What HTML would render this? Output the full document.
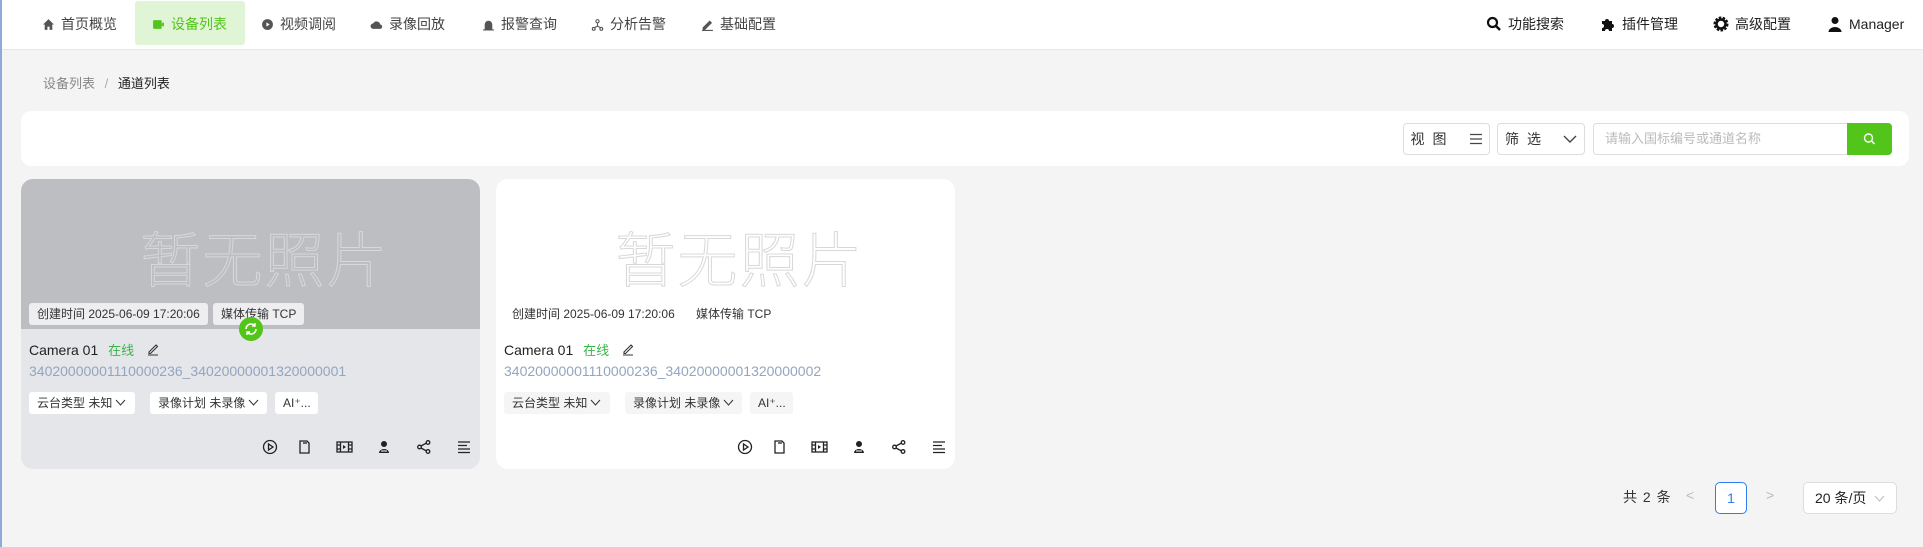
<!DOCTYPE html>
<html><head><meta charset="utf-8"><style>
*{box-sizing:border-box;margin:0;padding:0}
body{width:1923px;height:547px;background:#f4f4f4;font-family:"Liberation Sans","Noto Sans CJK SC",sans-serif;position:relative;overflow:hidden;color:#333}
.abs{position:absolute}
.nav{left:0;top:0;width:1923px;height:50px;background:#fff;border-bottom:1px solid #e8e8e8}
.ni{position:absolute;top:0;height:48px;font-size:14px;color:#444;display:flex;align-items:center;gap:6px;white-space:nowrap}
.act{left:135px;top:1px;width:110px;height:44px;background:#e0f5d6;border-radius:3px}
.tag{position:absolute;height:22px;line-height:22px;font-size:12px;padding:0 8px;border-radius:3px;background:#f0f0f2;color:#333;white-space:nowrap}
.card{position:absolute;top:179px;width:459px;height:290px;border-radius:12px;overflow:hidden}
.ph{position:absolute;left:0;top:0;width:459px;height:150px}
.big{position:absolute;top:34px;left:14px;width:459px;text-align:center;font-size:60px;color:transparent;-webkit-text-stroke:1px #d8d8d8;letter-spacing:2px;font-family:"Noto Sans CJK SC",sans-serif;font-weight:300}
.ic{position:absolute;top:439px}
.btn{position:absolute;top:123px;height:32px;border:1px solid #ddd;border-radius:4px;font-size:14px;display:flex;align-items:center;justify-content:center;gap:14px;background:#fff;white-space:nowrap}
</style></head><body>
<div class="abs" style="left:0;top:0;width:2px;height:547px;background:#8eaad6;z-index:5"></div>
<div class="abs nav"></div>
<div class="abs act"></div>
<div class="ni" style="left:42px"><svg width="13" height="13" viewBox="0 0 12 12"><path d="M6 1L1 6h1.5v5h2.5V8h2v3h2.5V6H11z" fill="#555"/></svg>首页概览</div>
<div class="ni" style="left:152px;color:#52c41a"><svg width="13" height="13" viewBox="0 0 12 12"><rect x="1" y="2" width="8" height="8" rx="1" fill="#52c41a"/><path d="M9 5l2-1v4l-2-1z" fill="#52c41a"/></svg>设备列表</div>
<div class="ni" style="left:261px"><svg width="13" height="13" viewBox="0 0 12 12"><circle cx="6" cy="6" r="5" fill="#555"/><path d="M5 4l3 2-3 2z" fill="#fff"/></svg>视频调阅</div>
<div class="ni" style="left:370px"><svg width="13" height="13" viewBox="0 0 12 12"><path d="M3 10a2.5 2.5 0 010-5 3.5 3.5 0 016.5 1A2 2 0 019 10z" fill="#555"/></svg>录像回放</div>
<div class="ni" style="left:482px"><svg width="13" height="13" viewBox="0 0 12 12"><path d="M3 10V6a3 3 0 016 0v4zM1 11h10" stroke="#555" fill="#555"/></svg>报警查询</div>
<div class="ni" style="left:591px"><svg width="13" height="13" viewBox="0 0 12 12"><circle cx="6" cy="3" r="1.5" fill="none" stroke="#555"/><circle cx="2.5" cy="10" r="1.3" fill="none" stroke="#555"/><circle cx="9.5" cy="10" r="1.3" fill="none" stroke="#555"/><path d="M6 4.5v3L3 9M6 7.5L9 9" stroke="#555" fill="none"/></svg>分析告警</div>
<div class="ni" style="left:701px"><svg width="13" height="13" viewBox="0 0 12 12"><path d="M2 9l6-6 1.5 1.5-6 6H2zM1 11.5h10" stroke="#555" fill="#555"/></svg>基础配置</div>
<div class="ni" style="left:1486px;color:#222"><svg width="16" height="16" viewBox="0 0 16 16"><circle cx="6.5" cy="6.5" r="4.5" fill="none" stroke="#111" stroke-width="2.2"/><path d="M10 10l4 4" stroke="#111" stroke-width="2.5"/></svg>功能搜索</div>
<div class="ni" style="left:1600px;color:#222"><svg width="16" height="16" viewBox="0 0 16 16"><path d="M2 5h3a2 2 0 114 0h3v3a2 2 0 110 4v3H9a2 2 0 10-4 0H2v-3a2 2 0 100-4z" fill="#111"/></svg>插件管理</div>
<div class="ni" style="left:1713px;color:#222"><svg width="16" height="16" viewBox="0 0 16 16"><circle cx="8" cy="8" r="5.5" fill="none" stroke="#111" stroke-width="4" stroke-dasharray="2.2 1.2"/><circle cx="8" cy="8" r="4.5" fill="none" stroke="#111" stroke-width="2.5"/></svg>高级配置</div>
<div class="ni" style="left:1827px;color:#222"><svg width="16" height="16" viewBox="0 0 16 16"><circle cx="8" cy="4.5" r="3.5" fill="#111"/><path d="M1.5 16a6.5 5 0 0113 0z" fill="#111"/></svg>Manager</div>

<div class="abs" style="left:43px;top:73px;font-size:13px;color:#888">设备列表 <span style="margin:0 6px;color:#aaa">/</span> <span style="color:#222">通道列表</span></div>

<div class="abs" style="left:21px;top:111px;width:1888px;height:55px;background:#fff;border-radius:10px"></div>
<div class="btn" style="left:1403px;width:87px"><span style="letter-spacing:8px">视图</span><svg width="14" height="12" viewBox="0 0 14 12"><path d="M1 1.5h12M1 6h12M1 10.5h12" stroke="#444" stroke-width="1.2"/></svg></div>
<div class="btn" style="left:1497px;width:88px"><span style="letter-spacing:8px">筛选</span><svg width="14" height="10" viewBox="0 0 14 10"><path d="M1 2l6 6 6-6" stroke="#444" fill="none" stroke-width="1.4"/></svg></div>
<div class="abs" style="left:1593px;top:123px;width:255px;height:32px;border:1px solid #ddd;border-right:none;border-radius:4px 0 0 4px;font-size:13px;line-height:30px;padding-left:11px;color:#bbb;background:#fff">请输入国标编号或通道名称</div>
<div class="abs" style="left:1847px;top:123px;width:45px;height:32px;background:#52c41a;border-radius:0 4px 4px 0"><svg width="45" height="32" viewBox="0 0 45 32"><circle cx="21.5" cy="15" r="4" fill="none" stroke="#fff" stroke-width="1.4"/><path d="M24.5 18l3 3" stroke="#fff" stroke-width="1.4"/></svg></div>

<div class="card" style="left:21px;background:#e5e6ea">
 <div class="ph" style="background:#bdbec2"></div>
 <div class="big">暂无照片</div>
 <div class="tag" style="left:8px;top:124px;background:#eeeef0">创建时间 2025-06-09 17:20:06</div>
 <div class="tag" style="left:192px;top:124px;background:#eeeef0">媒体传输 TCP</div>
</div>
<div class="abs" style="left:239px;top:317px;width:24px;height:24px;border-radius:50%;background:#52c41a"><svg width="24" height="24" viewBox="0 0 24 24"><path d="M7 12a5 5 0 019-3M17 12a5 5 0 01-9 3" stroke="#fff" fill="none" stroke-width="1.6"/><path d="M16 6v3h-3M8 18v-3h3" stroke="#fff" fill="none" stroke-width="1.4"/></svg></div>
<div class="card" style="left:496px;background:#fff">
 <div class="big">暂无照片</div>
 <div class="tag" style="left:8px;top:124px;background:#fff">创建时间 2025-06-09 17:20:06</div>
 <div class="tag" style="left:192px;top:124px;background:#fff">媒体传输 TCP</div>
</div>

<div id="c1"></div>
<script>
function card(x,id,sel){
var h='';
h+='<div class="abs" style="left:'+x+'px;top:340px;font-size:14px;color:#222;white-space:nowrap">Camera 01 <span style="color:#3cb34a;font-size:13px;margin-left:6px">在线</span><svg style="margin-left:12px;vertical-align:-1px" width="14" height="14" viewBox="0 0 14 14"><path d="M3 10l7-7 1.5 1.5-7 7H3zM2 13h10" stroke="#333" fill="none" stroke-width="1.1"/></svg></div>';
h+='<div class="abs" style="left:'+x+'px;top:363px;font-size:14px;color:#93a5c0">'+id+'</div>';
var ch='<svg style="margin-left:3px;vertical-align:0" width="11" height="8" viewBox="0 0 11 8"><path d="M1 1l4.5 5L10 1" stroke="#333" fill="none"/></svg>';
h+='<div class="tag" style="left:'+x+'px;top:392px;width:106px;background:'+sel+'">云台类型 未知'+ch+'</div>';
h+='<div class="tag" style="left:'+(x+121)+'px;top:392px;width:117px;background:'+sel+'">录像计划 未录像'+ch+'</div>';
h+='<div class="tag" style="left:'+(x+246)+'px;top:392px;width:43px;background:'+sel+'">AI⁺...</div>';
var ix=[x+233,x+267,x+307,x+347,x+387,x+427];
var s='stroke="#222" fill="none" stroke-width="1.3"';
var icons=[
'<circle cx="8" cy="8" r="6.5" '+s+'/><path d="M6.5 5v6l4.5-3z" '+s+'/>',
'<path d="M4 2h7l2 2v10H4z" '+s+'/><path d="M8 3v2M10 3v2" '+s+'/>',
'<rect x="1" y="3" width="15" height="10" '+s+'/><path d="M4.5 3v10M12.5 3v10M1 6h3.5M1 10h3.5M12.5 6h3.5M12.5 10h3.5" '+s+'/><path d="M7 6v4l3-2z" fill="#222"/>',
'<circle cx="8" cy="5" r="3" fill="#222"/><path d="M3 14a5 4 0 0110 0z" fill="#222"/><path d="M5 12h6" stroke="#fff"/>',
'<circle cx="12" cy="3.5" r="1.8" '+s+'/><circle cx="3.5" cy="8" r="1.8" '+s+'/><circle cx="12" cy="12.5" r="1.8" '+s+'/><path d="M5 7l5.5-3M5 9l5.5 3" '+s+'/>',
'<path d="M2 3h12M2 6.5h9M2 10h12M2 13.5h12" '+s+'/>'];
for(var i=0;i<6;i++)h+='<svg class="ic" style="left:'+ix[i]+'px" width="17" height="17" viewBox="0 0 17 17">'+icons[i]+'</svg>';
return h;}
document.getElementById('c1').innerHTML=card(29,'34020000001110000236_34020000001320000001','#fff')+card(504,'34020000001110000236_34020000001320000002','#f5f5f5');
</script>

<div class="abs" style="left:1623px;top:487px;font-size:14px;color:#333;letter-spacing:1px">共 2 条</div>
<div class="abs" style="left:1686px;top:487px;font-size:14px;color:#bbb">&lt;</div>
<div class="abs" style="left:1715px;top:482px;width:32px;height:32px;border:1px solid #2f7bf5;border-radius:5px;text-align:center;line-height:30px;font-size:14px;color:#2f7bf5;background:#fff">1</div>
<div class="abs" style="left:1766px;top:487px;font-size:14px;color:#bbb">&gt;</div>
<div class="abs" style="left:1803px;top:482px;width:94px;height:32px;border:1px solid #ddd;border-radius:5px;background:#fff;font-size:14px;line-height:30px;padding-left:11px;color:#222;white-space:nowrap">20 条/页 <svg style="margin-left:4px" width="11" height="8" viewBox="0 0 11 8"><path d="M1 1l4.5 5L10 1" stroke="#bbb" fill="none"/></svg></div>
</body></html>
